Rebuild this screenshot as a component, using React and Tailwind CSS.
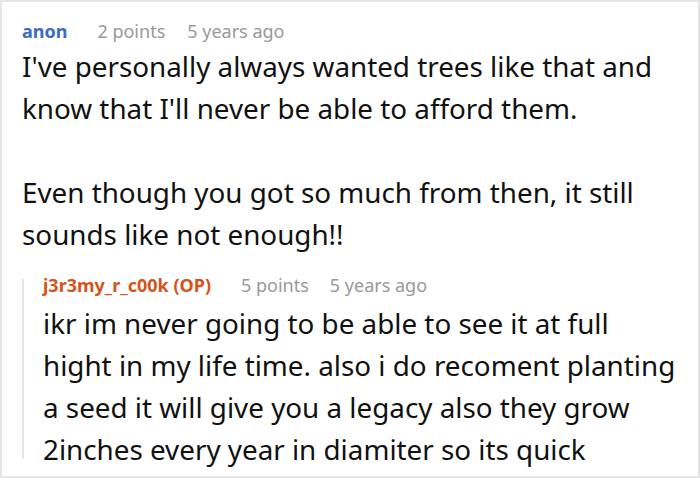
export default function App() {
  return (
    <div className="w-[700px] h-[478px] bg-white border-2 border-[#e6e6e6] overflow-hidden" style={{ fontFamily: '"Noto Sans", sans-serif' }}>
      <div className="pl-[20px] pt-[17px]">
        <div className="flex items-baseline text-[18px] leading-[24px]">
          <span className="font-bold text-[#3a6cc0]">anon</span>
          <span className="ml-[30px] text-[#999]">2 points</span>
          <span className="ml-[22px] text-[#999]">5 years ago</span>
        </div>
        <div className="text-[27.8px] leading-[42px] text-[#111] mt-[2px]">
          <p>I've personally always wanted trees like that and</p>
          <p>know that I'll never be able to afford them.</p>
          <p>&nbsp;</p>
          <p>Even though you got so much from then, it still</p>
          <p>sounds like not enough!!</p>
        </div>
        <div className="flex mt-[18px]">
          <div className="w-[2px] bg-[#e6e6e6] mt-[6px] h-[180px] shrink-0" />
          <div className="pl-[19px]">
            <div className="flex items-baseline text-[18px] leading-[24px]">
              <span className="font-bold text-[#d4541c]">j3r3my_r_c00k (OP)</span>
              <span className="ml-[30px] text-[#999]">5 points</span>
              <span className="ml-[21px] text-[#999]">5 years ago</span>
            </div>
            <div className="text-[27.8px] leading-[42px] text-[#111] mt-[5px] whitespace-nowrap">
              <p>ikr im never going to be able to see it at full</p>
              <p>hight in my life time. also i do recoment planting</p>
              <p>a seed it will give you a legacy also they grow</p>
              <p>2inches every year in diamiter so its quick</p>
            </div>
          </div>
        </div>
      </div>
    </div>
  );
}
